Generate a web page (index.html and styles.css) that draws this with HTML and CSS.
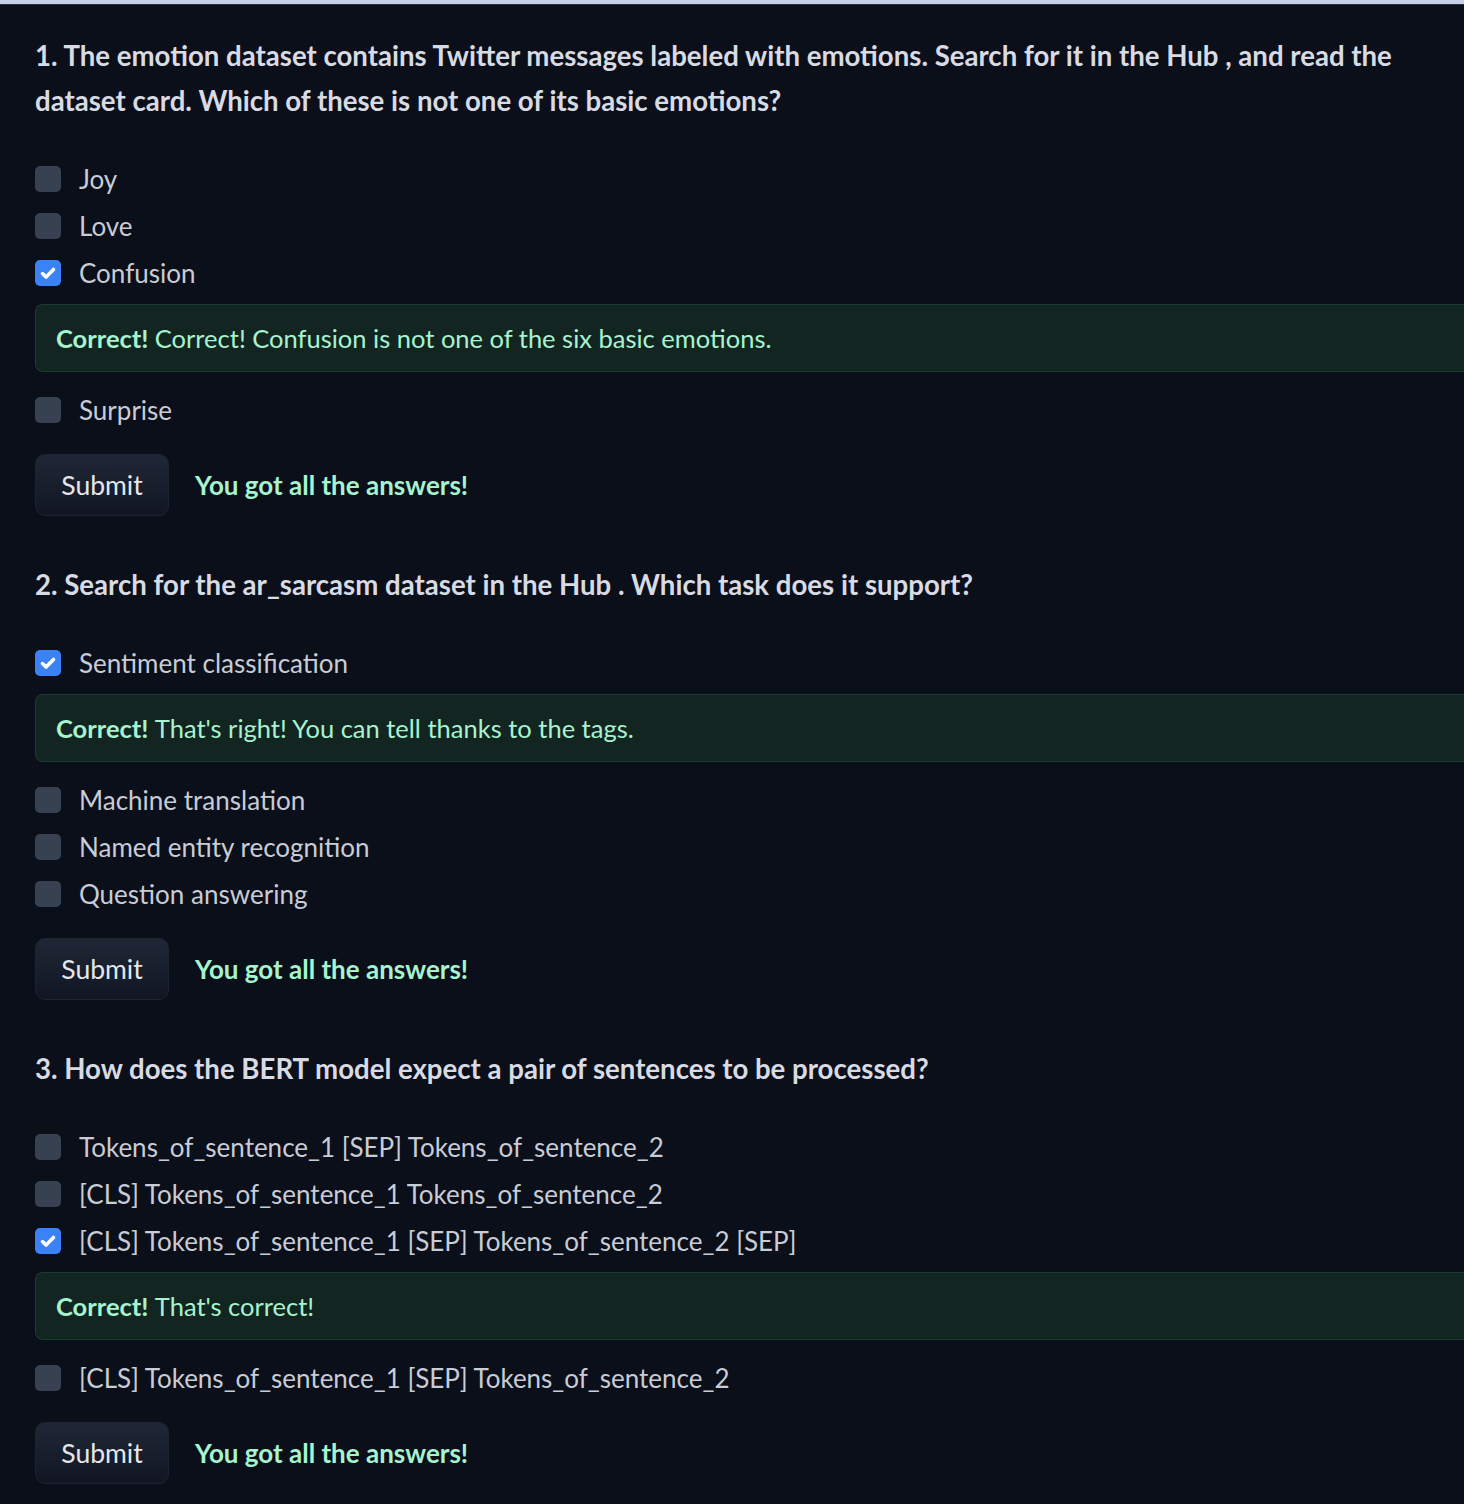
FILE: index.html
```html
<!DOCTYPE html>
<html lang="en">
<head>
<meta charset="utf-8">
<title>Quiz</title>
<link rel="stylesheet" href="styles.css">
</head>
<body>
<div class="topbar"></div>
<main class="quiz">

  <section class="question">
    <h2 class="q-title">1. The emotion dataset contains Twitter messages labeled with emotions. Search for it in the Hub , and read the dataset card. Which of these is not one of its basic emotions?</h2>
    <div class="options">
      <label class="option"><span class="box"></span><span class="text">Joy</span></label>
      <label class="option"><span class="box"></span><span class="text">Love</span></label>
      <label class="option"><span class="box checked"><svg viewBox="0 0 16 16"><path d="M4 8.4l2.6 2.5L12 5.4"/></svg></span><span class="text">Confusion</span></label>
      <div class="feedback"><b>Correct!</b> Correct! Confusion is not one of the six basic emotions.</div>
      <label class="option"><span class="box"></span><span class="text">Surprise</span></label>
    </div>
    <div class="actions">
      <button class="submit" type="button">Submit</button>
      <span class="result">You got all the answers!</span>
    </div>
  </section>

  <section class="question">
    <h2 class="q-title">2. Search for the ar_sarcasm dataset in the Hub . Which task does it support?</h2>
    <div class="options">
      <label class="option"><span class="box checked"><svg viewBox="0 0 16 16"><path d="M4 8.4l2.6 2.5L12 5.4"/></svg></span><span class="text">Sentiment classification</span></label>
      <div class="feedback"><b>Correct!</b> That's right! You can tell thanks to the tags.</div>
      <label class="option"><span class="box"></span><span class="text">Machine translation</span></label>
      <label class="option"><span class="box"></span><span class="text">Named entity recognition</span></label>
      <label class="option"><span class="box"></span><span class="text">Question answering</span></label>
    </div>
    <div class="actions">
      <button class="submit" type="button">Submit</button>
      <span class="result">You got all the answers!</span>
    </div>
  </section>

  <section class="question">
    <h2 class="q-title">3. How does the BERT model expect a pair of sentences to be processed?</h2>
    <div class="options">
      <label class="option"><span class="box"></span><span class="text">Tokens_of_sentence_1 [SEP] Tokens_of_sentence_2</span></label>
      <label class="option"><span class="box"></span><span class="text">[CLS] Tokens_of_sentence_1 Tokens_of_sentence_2</span></label>
      <label class="option"><span class="box checked"><svg viewBox="0 0 16 16"><path d="M4 8.4l2.6 2.5L12 5.4"/></svg></span><span class="text">[CLS] Tokens_of_sentence_1 [SEP] Tokens_of_sentence_2 [SEP]</span></label>
      <div class="feedback"><b>Correct!</b> That's correct!</div>
      <label class="option"><span class="box"></span><span class="text">[CLS] Tokens_of_sentence_1 [SEP] Tokens_of_sentence_2</span></label>
    </div>
    <div class="actions">
      <button class="submit" type="button">Submit</button>
      <span class="result">You got all the answers!</span>
    </div>
  </section>

</main>
</body>
</html>
```
FILE: styles.css
```css
html, body {
  margin: 0;
  padding: 0;
  background: #0b0f19;
}
body {
  font-family: Lato, "Open Sans", "Liberation Sans", sans-serif;
  color: #c9ced8;
  overflow-x: hidden;
}
.topbar {
  height: 4px;
  background: #c6d1e8;
  border-bottom: 1px solid #2a3142;
}
.quiz {
  padding: 28px 0 20px 35px;
}
.question + .question {
  margin-top: 46px;
}
.q-title {
  margin: 0;
  max-width: 1400px;
  font-size: 27.6px;
  font-weight: 700;
  line-height: 45px;
  color: #d8dbe3;
}
.options {
  margin-top: 32px;
  display: flex;
  flex-direction: column;
}
.option {
  display: flex;
  align-items: center;
  gap: 18px;
  height: 47px;
}
.box {
  width: 26px;
  height: 26px;
  flex: none;
  border-radius: 5px;
  background: #374151;
  display: flex;
  align-items: center;
  justify-content: center;
}
.box.checked {
  background: #3b82f6;
}
.box svg {
  width: 22px;
  height: 22px;
  fill: none;
  stroke: #ffffff;
  stroke-width: 2.6;
  stroke-linecap: round;
  stroke-linejoin: round;
}
.text {
  font-size: 26px;
  color: #c8ccd6;
}
.feedback {
  margin: 8px 0 14px;
  height: 68px;
  box-sizing: border-box;
  display: flex;
  align-items: center;
  gap: 0.25em;
  padding: 0 20px;
  background: #132521;
  border: 1px solid #1c3b31;
  border-right: none;
  border-radius: 8px 0 0 8px;
  font-size: 25.5px;
  color: #a7f3d0;
}
.feedback b {
  font-weight: 700;
}
.actions {
  margin-top: 21px;
  display: flex;
  align-items: center;
  gap: 26px;
}
.submit {
  width: 134px;
  height: 62px;
  border-radius: 10px;
  border: 1px solid #1c2333;
  background: linear-gradient(180deg, #1f2736 0%, #111622 100%);
  color: #e5e7eb;
  font-family: inherit;
  font-size: 26.5px;
  padding: 0;
}
.result {
  font-size: 26px;
  font-weight: 700;
  color: #a7f3d0;
}
```
